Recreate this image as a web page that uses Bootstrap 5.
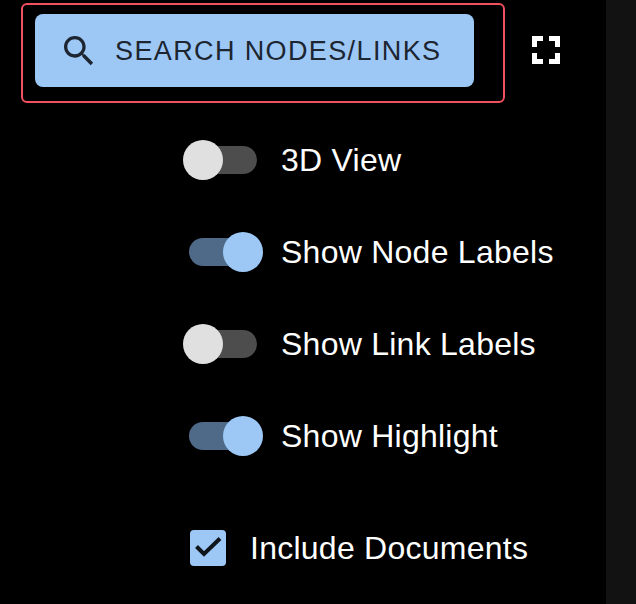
<!DOCTYPE html>
<html lang="en">
<head>
    <meta charset="UTF-8">
    <meta name="viewport" content="width=device-width, initial-scale=1.0">
    <title>Graph controls</title>
    <link href="https://cdn.jsdelivr.net/npm/bootstrap@5.3.0/dist/css/bootstrap.min.css" rel="stylesheet">
    <style>
        html, body {
            height: 100%;
        }
        body {
            font-family: "Liberation Sans", Arial, sans-serif;
            background-color: #000;
            color: #fff;
            overflow: hidden;
        }
        .page-wrap {
            height: 604px;
        }
        .main-pane {
            width: 606px;
            padding: 3px 0 0 21px;
        }
        .side-pane {
            width: 30px;
            background-color: #121212;
        }
        .search-frame {
            width: 484px;
            height: 100px;
            padding: 9px 31px 16px 12px;
            border: 2px solid #f0505f;
            border-radius: 6px;
        }
        .search-btn {
            width: 439px;
            height: 73px;
            padding: 1px 0 0 24px;
            gap: 16px;
            background-color: #9dc8f6;
            border: 0;
            border-radius: 8px;
            color: #1c2530;
            font-size: 27px;
            letter-spacing: 1.38px;
        }
        .expand-btn {
            margin: 33px 0 0 27px;
            padding: 0;
            background: none;
            border: 0;
            line-height: 0;
        }
        .toggle-list {
            margin: 37px 0 0 162px;
            gap: 52px;
        }
        .toggle-row {
            height: 40px;
            font-size: 32px;
            letter-spacing: .25px;
        }
        .toggle-track {
            position: relative;
            display: block;
            width: 68px;
            height: 28px;
            margin: 0 24px 0 6px;
            border-radius: 14px;
            background-color: #4d4d4d;
        }
        .toggle-track.is-on {
            background-color: #4f6a88;
        }
        .toggle-thumb {
            position: absolute;
            top: -6px;
            left: -6px;
            width: 40px;
            height: 40px;
            border-radius: 50%;
            background-color: #e0e0e0;
        }
        .is-on .toggle-thumb {
            left: 34px;
            background-color: #9dc8f6;
        }
        .doc-row {
            margin: 74px 0 0 169px;
            height: 36px;
            font-size: 32px;
            letter-spacing: .25px;
            gap: 24px;
        }
        .doc-box {
            width: 36px;
            height: 36px;
            border-radius: 4px;
            background-color: #9dc8f6;
        }
    </style>
</head>
<body>
    <div class="page-wrap d-flex">
        <div class="main-pane">
            <!-- search -->
            <div class="d-flex align-items-start">
                <div class="search-frame">
                    <button type="button" class="search-btn d-flex align-items-center">
                        <svg width="40" height="40" viewBox="0 0 24 24" fill="#1c2530"><path d="M15.5 14h-.79l-.28-.27C15.41 12.59 16 11.11 16 9.5 16 5.91 13.09 3 9.5 3S3 5.91 3 9.5 5.91 16 9.5 16c1.61 0 3.09-.59 4.23-1.57l.27.28v.79l5 4.99L20.49 19l-4.99-5zm-6 0C7.01 14 5 11.99 5 9.5S7.01 5 9.5 5 14 7.01 14 9.5 11.99 14 9.5 14z"/></svg>
                        <span>SEARCH NODES/LINKS</span>
                    </button>
                </div>
                <button type="button" class="expand-btn" aria-label="Fullscreen">
                    <svg width="28" height="28" viewBox="0 0 28 28" fill="#fff"><path d="M0 0h11v5H5v6H0zM17 0h11v11h-5V5h-6zM0 17h5v6h6v5H0zM23 17h5v11H17v-5h6z"/></svg>
                </button>
            </div>

            <!-- toggles -->
            <div class="toggle-list d-flex flex-column">
                <div class="toggle-row d-flex align-items-center">
                    <span class="toggle-track"><span class="toggle-thumb"></span></span>
                    <span>3D View</span>
                </div>
                <div class="toggle-row d-flex align-items-center">
                    <span class="toggle-track is-on"><span class="toggle-thumb"></span></span>
                    <span>Show Node Labels</span>
                </div>
                <div class="toggle-row d-flex align-items-center">
                    <span class="toggle-track"><span class="toggle-thumb"></span></span>
                    <span>Show Link Labels</span>
                </div>
                <div class="toggle-row d-flex align-items-center">
                    <span class="toggle-track is-on"><span class="toggle-thumb"></span></span>
                    <span>Show Highlight</span>
                </div>
            </div>

            <div class="doc-row d-flex align-items-center">
                <span class="doc-box d-flex align-items-center justify-content-center">
                    <svg width="36" height="36" viewBox="0 0 36 36" fill="none" stroke="#10151c" stroke-width="4"><path d="M6.5 16.5l7.5 7.5L30 8.5"/></svg>
                </span>
                <span>Include Documents</span>
            </div>
        </div>
        <div class="side-pane"></div>
    </div>
    <script src="https://cdn.jsdelivr.net/npm/bootstrap@5.3.0/dist/js/bootstrap.bundle.min.js"></script>
</body>
</html>
